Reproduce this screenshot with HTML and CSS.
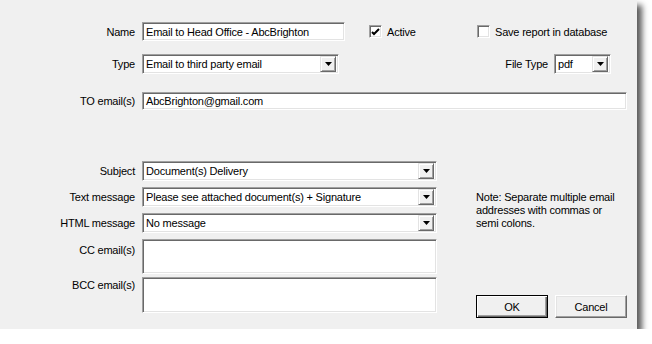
FILE: index.html
```html
<!DOCTYPE html>
<html lang="en">
<head>
  <meta charset="UTF-8" />
  <title>Email Report Settings</title>
  <link rel="stylesheet" href="styles.css">
</head>
<body>

  <div class="dialog">

    <div class="row row-name">
      <span class="lbl">Name</span>
      <div class="field name">Email to Head Office - AbcBrighton</div>
      <div class="check active">
        <span class="box">
          <svg width="9" height="9" viewBox="0 0 9 9"><path d="M1 4 L3 6 L8 1" fill="none" stroke="#000" stroke-width="2"/></svg>
        </span>
        Active
      </div>
      <div class="check">
        <span class="box"></span>
        Save report in database
      </div>
    </div>

    <div class="row row-type">
      <span class="lbl">Type</span>
      <div class="field combo type">
        <span class="combo-text">Email to third party email</span>
        <span class="drop"><svg width="7" height="4" viewBox="0 0 7 4"><polygon points="0,0 7,0 3.5,4" fill="#000"/></svg></span>
      </div>
      <span class="lbl-inline">File Type</span>
      <div class="field combo filetype">
        <span class="combo-text">pdf</span>
        <span class="drop"><svg width="7" height="4" viewBox="0 0 7 4"><polygon points="0,0 7,0 3.5,4" fill="#000"/></svg></span>
      </div>
    </div>

    <div class="row row-to">
      <span class="lbl">TO email(s)</span>
      <div class="field to">AbcBrighton@gmail.com</div>
    </div>

    <div class="lower">
      <div class="form">
        <span class="lbl">Subject</span>
        <div class="field combo">
          <span class="combo-text">Document(s) Delivery</span>
          <span class="drop"><svg width="7" height="4" viewBox="0 0 7 4"><polygon points="0,0 7,0 3.5,4" fill="#000"/></svg></span>
        </div>

        <span class="lbl">Text message</span>
        <div class="field combo">
          <span class="combo-text">Please see attached document(s) + Signature</span>
          <span class="drop"><svg width="7" height="4" viewBox="0 0 7 4"><polygon points="0,0 7,0 3.5,4" fill="#000"/></svg></span>
        </div>

        <span class="lbl">HTML message</span>
        <div class="field combo">
          <span class="combo-text">No message</span>
          <span class="drop"><svg width="7" height="4" viewBox="0 0 7 4"><polygon points="0,0 7,0 3.5,4" fill="#000"/></svg></span>
        </div>

        <span class="lbl lbl-top cc-lbl">CC email(s)</span>
        <div class="field memo"></div>

        <span class="lbl lbl-top bcc-lbl">BCC email(s)</span>
        <div class="field memo bcc"></div>
      </div>

      <div class="side">
        <p class="note">Note: Separate multiple email addresses with commas or semi colons.</p>
        <div class="buttons">
          <div class="btn default">OK</div>
          <div class="btn">Cancel</div>
        </div>
      </div>
    </div>

  </div>

</body>
</html>
```

FILE: styles.css
```css
body {
  margin: 0;
  background: #fff;
  font-family: 'Liberation Sans', Arial, sans-serif;
  font-size: 11px;
  letter-spacing: -0.2px;
  color: #000;
}

.dialog {
  width: 637px;
  height: 329px;
  box-sizing: border-box;
  padding-top: 22px;
  background: #f0f0f0;
  box-shadow: 5px 5px 6px rgba(0,0,0,0.65);
}

.row {
  display: flex;
  align-items: center;
}

.lbl {
  width: 135px;
  margin-right: 7px;
  text-align: right;
  flex-shrink: 0;
}

/* sunken 3D edit box */
.field {
  box-sizing: border-box;
  background: #fff;
  border: 1px solid;
  border-color: #a0a0a0 #fff #fff #a0a0a0;
  box-shadow: inset 1px 1px 0 #696969, inset -1px -1px 0 #e3e3e3;
  padding: 0 3px;
  display: flex;
  align-items: center;
  white-space: nowrap;
  overflow: hidden;
}

.combo {
  padding-right: 2px;
}

.combo-text {
  flex: 1;
}

.drop {
  width: 16px;
  height: 16px;
  box-sizing: border-box;
  background: #f0f0f0;
  border: 1px solid;
  border-color: #e3e3e3 #696969 #696969 #e3e3e3;
  box-shadow: inset 1px 1px 0 #fff, inset -1px -1px 0 #a0a0a0;
  display: flex;
  align-items: center;
  justify-content: center;
}

.row-name .field.name {
  width: 203px;
  height: 19px;
}

.check {
  display: flex;
  align-items: center;
}

.check.active {
  margin-left: 24px;
  width: 108px;
}

.box {
  width: 13px;
  height: 13px;
  box-sizing: border-box;
  margin-right: 5px;
  background: #fff;
  border: 1px solid;
  border-color: #a0a0a0 #fff #fff #a0a0a0;
  box-shadow: inset 1px 1px 0 #696969, inset -1px -1px 0 #e3e3e3;
  display: flex;
  align-items: center;
  justify-content: center;
}

.box svg {
  margin-top: 1px;
}

.row-type {
  margin-top: 13px;
  padding-right: 26px;
}

.field.type {
  width: 197px;
  height: 20px;
}

.lbl-inline {
  margin-left: auto;
  margin-right: 6px;
}

.field.filetype {
  width: 57px;
  height: 20px;
}

.row-to {
  margin-top: 18px;
}

.field.to {
  width: 485px;
  height: 18px;
}

.lower {
  display: flex;
  margin-top: 51px;
}

.form {
  display: grid;
  grid-template-columns: 135px 295px;
  grid-template-rows: 20px 20px 20px 35px 36px;
  column-gap: 7px;
  row-gap: 6px;
}

.form .lbl {
  margin-right: 0;
  align-self: center;
}

.form .lbl-top {
  align-self: start;
  line-height: 13px;
}

.cc-lbl {
  padding-top: 5px;
}

.bcc-lbl {
  padding-top: 2px;
}

.field.memo {
  height: 100%;
}

.form .bcc,
.form .bcc-lbl {
  margin-top: -3px;
}

.side {
  margin-left: 39px;
  display: flex;
  flex-direction: column;
}

.note {
  margin: 30px 0 0 0;
  width: 150px;
  line-height: 13px;
}

.buttons {
  display: flex;
  gap: 7px;
  margin-top: auto;
  margin-bottom: -2px;
}

.btn {
  width: 72px;
  height: 23px;
  box-sizing: border-box;
  background: #f0f0f0;
  border: 1px solid;
  border-color: #fff #696969 #696969 #fff;
  box-shadow: inset -1px -1px 0 #a0a0a0, inset 1px 1px 0 #e3e3e3;
  display: flex;
  align-items: center;
  justify-content: center;
}

.btn.default {
  border-color: #000;
  box-shadow: inset 1px 1px 0 #fff, inset -1px -1px 0 #696969, inset -2px -2px 0 #a0a0a0;
}
```
